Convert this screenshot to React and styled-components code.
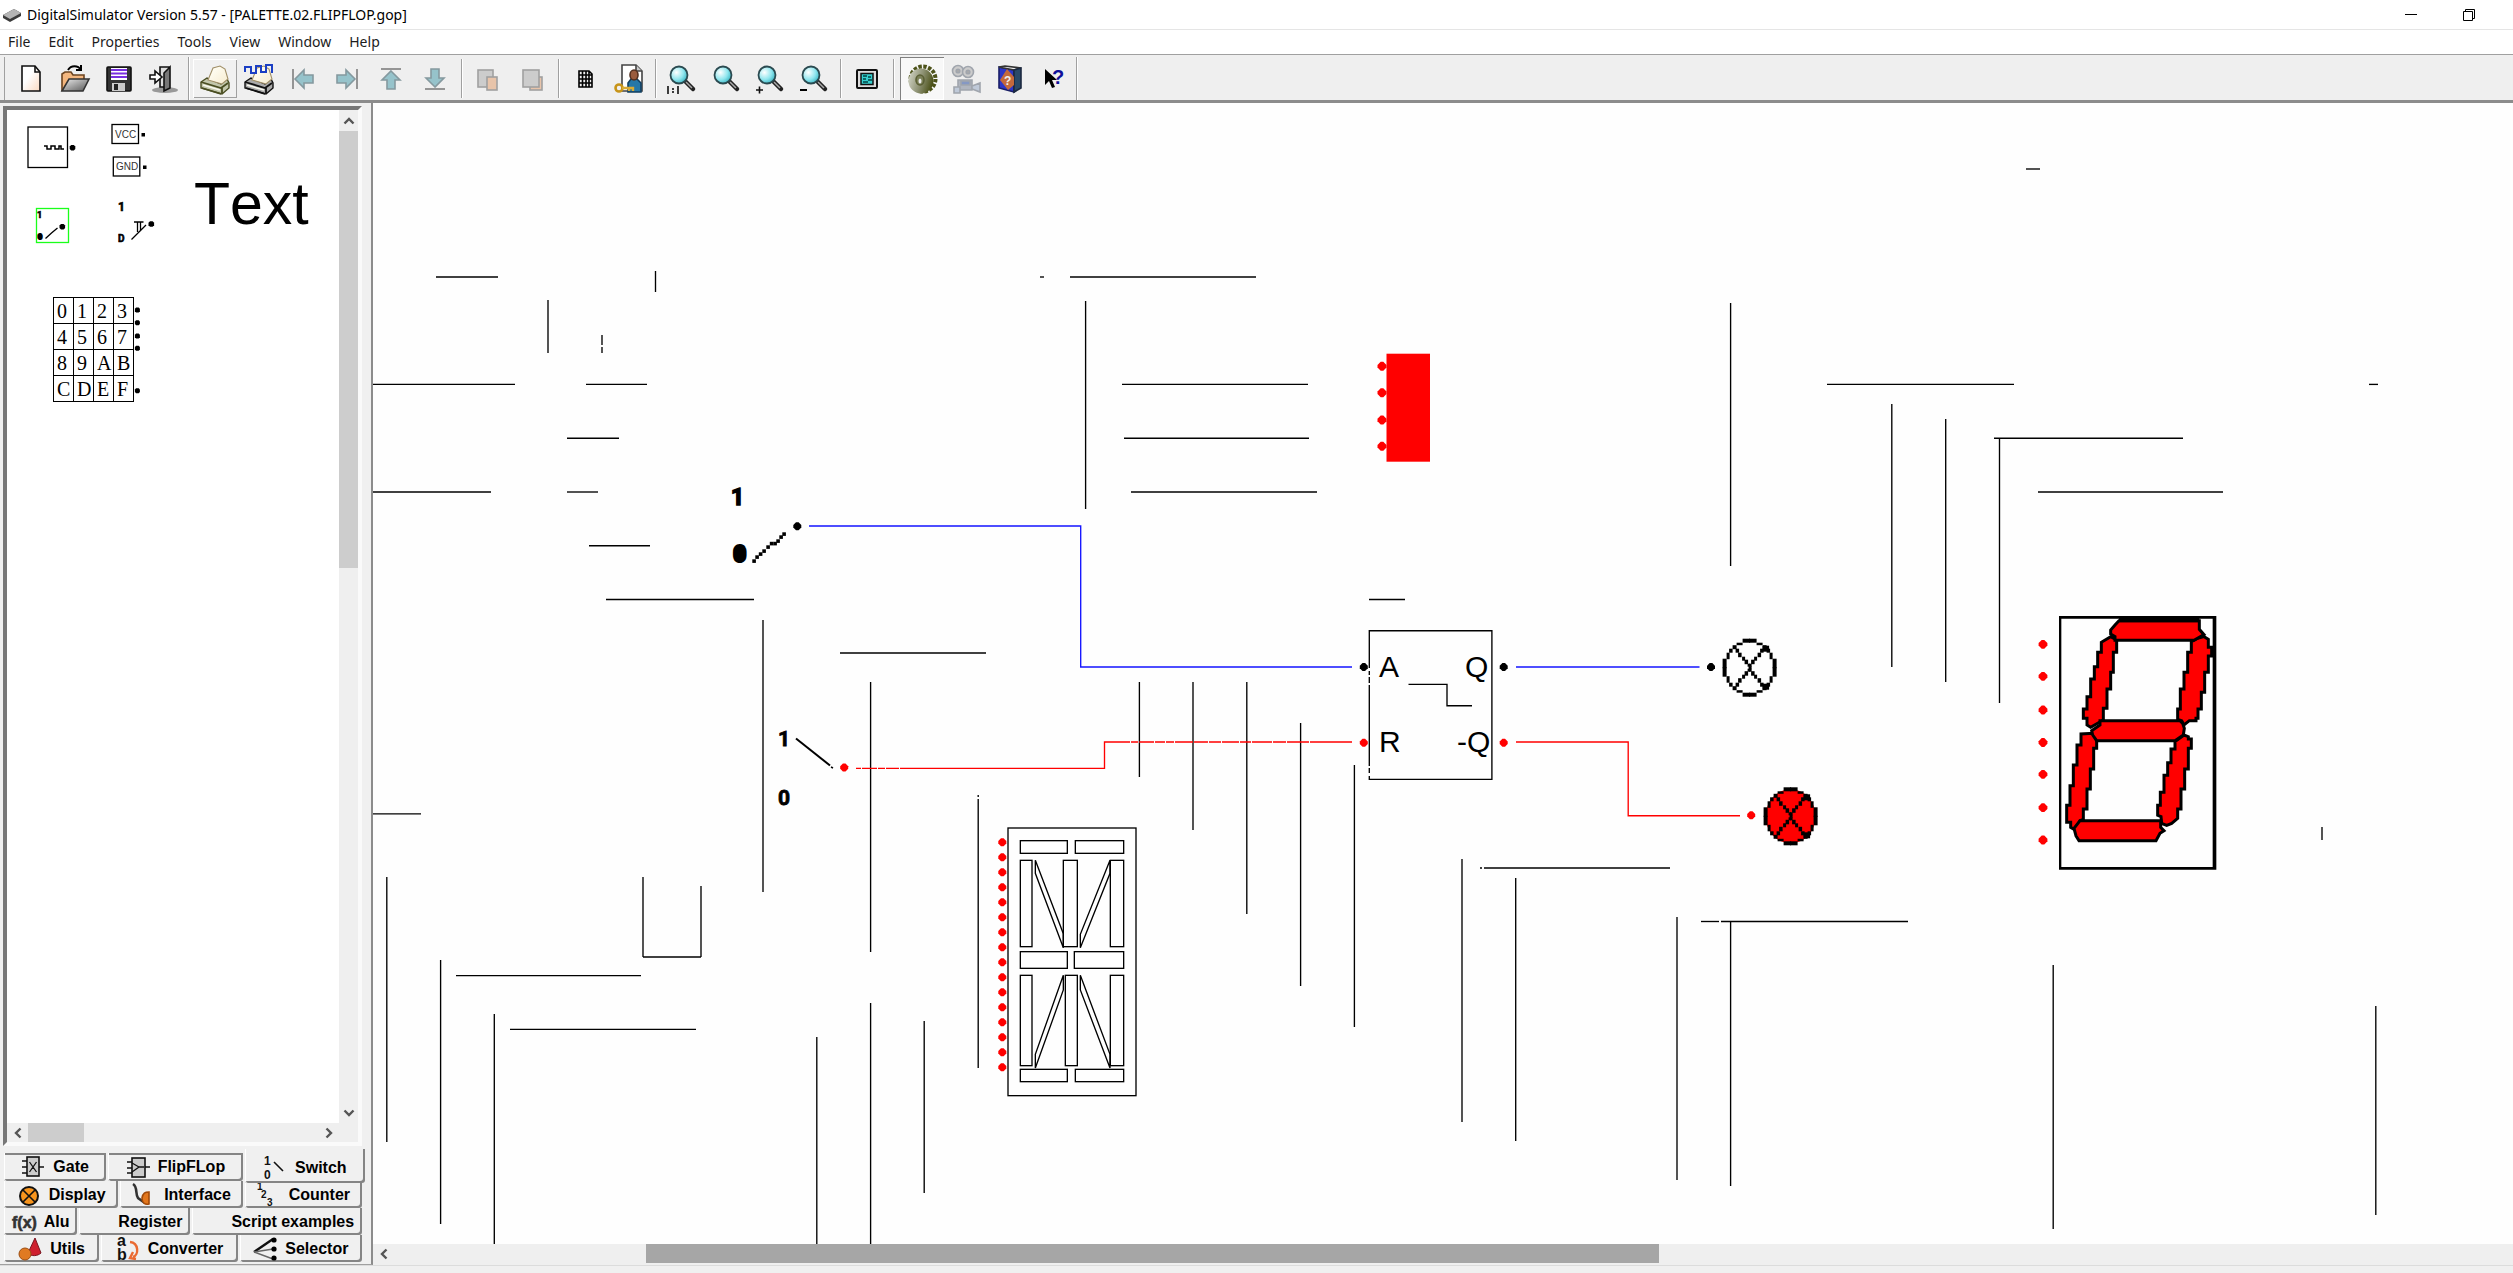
import React from "react";
import styled, { createGlobalStyle } from "styled-components";

const Global = createGlobalStyle`
  * { box-sizing: border-box; }
  body { margin: 0; background: #fff; color: #000; font-family: "Noto Sans", sans-serif; overflow: hidden; }
  button { font: inherit; color: inherit; padding: 0; border: 0; background: none; }
`;

const Window = styled.div`
  display: grid;
  grid-template-rows: 29px 25px 49px minmax(0, 1fr) 8px;
  height: 100vh;
`;

const TitleBar = styled.header`
  display: flex;
  align-items: center;
  gap: 6px;
  padding: 0 15px 0 3px;
`;

const Title = styled.h1`
  flex: 1;
  margin: 0;
  font-size: 14px;
  line-height: 20px;
  font-weight: 400;
`;

const WindowControls = styled.div`
  display: flex;
`;

const WindowButton = styled.button`
  display: grid;
  place-items: center;
  width: 58px;
  height: 28px;
`;

const MenuBar = styled.nav`
  display: flex;
  align-items: center;
  gap: 18px;
  padding: 0 8px;
  border-top: 1px solid #e5e5e5;
`;

const MenuItem = styled.button`
  font-size: 14px;
  line-height: 22px;
  color: #1c1c1c;
`;

const ToolBar = styled.div`
  display: flex;
  align-items: stretch;
  padding: 2px 0 0 4px;
  background: #efefef;
  border-top: 1px solid #a0a0a0;
  border-bottom: 3px solid #8c8c8c;
`;

const ToolGroup = styled.div`
  display: flex;
  margin: ${(p) => (p.$first || p.$last ? "0" : "2px 0")};
  padding: 0 4px;
  border-right: 1px solid #a0a0a0;
  box-shadow: 1px 0 #fff;
  ${(p) => p.$first && "border-left: 1px solid #a0a0a0; padding-right: 3px;"}
  ${(p) => p.$last && "padding: 0 0 0 6px;"}
`;

const ToolButton = styled.button`
  display: grid;
  place-items: center;
  width: 44px;
  ${(p) => p.$raised && "box-shadow: inset 1px 1px #fff, inset -1px -1px #a0a0a0; background: #f1f1f1;"}
  ${(p) => p.$pressed && "box-shadow: inset 1px 1px #808080, inset -1px -1px #fff; background: #f8f8f8;"}
  svg { display: block; }
`;

const Body = styled.main`
  display: grid;
  grid-template-columns: 373px minmax(0, 1fr);
  min-height: 0;
`;

const SidePane = styled.aside`
  display: flex;
  flex-direction: column;
  min-height: 0;
  background: #f0f0f0;
  border-right: 2px solid #8c8c8c;
  border-bottom: 1px solid #a0a0a0;
`;

const PaletteFrame = styled.section`
  flex: 1;
  min-height: 0;
  display: grid;
  grid-template: minmax(0, 1fr) 19px / minmax(0, 1fr) 19px;
  margin: 3px 9px 0 3px;
  border: 4px solid;
  border-color: #777 #fafafa #fafafa #777;
`;

const Palette = styled.div`
  position: relative;
  overflow: hidden;
  background: #fff;
`;

const Drawing = styled.svg`
  display: block;
  position: absolute;
  inset: 0;
  width: 100%;
  height: 100%;
`;

const HiddenDefs = styled.svg`
  position: absolute;
`;

const Scroll = styled.div`
  display: flex;
  flex-direction: ${(p) => (p.$vertical ? "column" : "row")};
  background: #efefef;
`;

const ScrollButton = styled.button`
  display: grid;
  place-items: center;
  flex: 0 0 21px;
`;

const Track = styled.div`
  flex: 1;
  display: flex;
  flex-direction: inherit;
`;

const Thumb = styled.div`
  flex: 0 0 ${(p) => p.$size};
  background: ${(p) => p.$color || "#cdcdcd"};
  ${(p) => p.$offset && `margin-left: ${p.$offset};`}
`;

const Keypad = styled.div`
  position: absolute;
  left: 46px;
  top: 187px;
  display: grid;
  grid-template-columns: repeat(4, 20px);
  grid-auto-rows: 26px;
  border: solid #000;
  border-width: 1px 0 0 1px;
`;

const Key = styled.button`
  && {
    border: solid #000;
    border-width: 0 1px 1px 0;
    padding-left: 3px;
    text-align: left;
    font: 20px/24px "Liberation Serif", serif;
  }
`;

const Label = styled.span`
  position: absolute;
  left: 187px;
  top: 60px;
  font: 59px/68px "Liberation Sans", sans-serif;
  font-kerning: none;
`;

const Tabs = styled.nav`
  padding: 7px 9px 2px 4px;
`;

const TabRow = styled.div`
  display: flex;
  gap: 2px;
  height: 28px;
  & + & { height: 27px; }
`;

const Tab = styled.button`
  && {
    flex: ${(p) => p.$w} 1 0;
    display: flex;
    align-items: center;
    justify-content: center;
    gap: 8px;
    font: bold 16px/18px "Liberation Sans", sans-serif;
    white-space: nowrap;
    border-radius: 0 0 3px 2px;
    box-shadow: inset 1px 0 #fff, inset -2px -2px #858585 ${(p) => (p.$top ? ", inset 0 2px #858585" : "")};
    ${(p) =>
      p.$selected &&
      `position: relative; margin: -4px -3px -2px 0; padding-top: 4px; z-index: 1; background: #f0f0f0;
       box-shadow: inset 1px 0 #fff, inset -2px -2px #858585;`}
  }
  svg { flex: none; overflow: visible; }
`;

const Workspace = styled.section`
  display: grid;
  grid-template-rows: minmax(0, 1fr) 19px 2px;
  min-height: 0;
`;

const Sheet = styled.div`
  position: relative;
  overflow: hidden;
  background: #fefefe;
`;

const Status = styled.footer`
  background: #f0f0f0;
  border-top: 1px solid #dcdcdc;
`;

/* ---------- small drawings ---------- */

const Chevron = ({ turn = 0 }) => (
  <svg width="12" height="12" viewBox="0 0 12 12" aria-hidden="true">
    <path d="M8.5 1.5 4 6l4.5 4.5" transform={`rotate(${turn} 6 6)`} fill="none" stroke="#555" strokeWidth="2.4" />
  </svg>
);

const Icon = ({ children, size = 32 }) => (
  <svg width={size} height={size} viewBox={`0 0 ${size} ${size}`} fill="none" stroke="#111" strokeWidth="1.6" aria-hidden="true">
    {children}
  </svg>
);

const Defs = () => (
  <HiddenDefs width="0" height="0" aria-hidden="true">
    <defs>
      <linearGradient id="paper" x1="0" y1="0" x2="1" y2="1">
        <stop offset="0.4" stopColor="#fff" />
        <stop offset="1" stopColor="#fbd9c0" />
      </linearGradient>
      <linearGradient id="sheet" x1="0" y1="0" x2="1" y2="1">
        <stop offset="0.2" stopColor="#fffdf2" />
        <stop offset="1" stopColor="#f6ecd0" />
      </linearGradient>
      <linearGradient id="steel" x1="0" y1="0" x2="1" y2="1">
        <stop offset="0" stopColor="#eee" />
        <stop offset="1" stopColor="#555" />
      </linearGradient>
      <radialGradient id="lens" cx="0.35" cy="0.35" r="0.7">
        <stop offset="0" stopColor="#fff" />
        <stop offset="0.6" stopColor="#8fe6ee" />
        <stop offset="1" stopColor="#3cb6c4" />
      </radialGradient>
      <linearGradient id="gear" x1="0" y1="0.3" x2="1" y2="0.6">
        <stop offset="0" stopColor="#cfd1c2" />
        <stop offset="0.5" stopColor="#8d9173" />
        <stop offset="1" stopColor="#474d12" />
      </linearGradient>
    </defs>
  </HiddenDefs>
);

const NewIcon = () => (
  <Icon>
    <path d="M7 3h13l5 6v19H7z" fill="url(#paper)" />
    <path d="M20 3v6h5" />
  </Icon>
);
const OpenIcon = () => (
  <Icon>
    <path d="M9 7c3-5 10-5 13 0M22 2v5h-5" stroke="#000" strokeWidth="2" />
    <path d="M3 28V11l3-2h6l2 3h11v4" fill="#f3b67e" stroke="#6b4420" />
    <path d="M3 28 10 16h20l-6 12z" fill="url(#steel)" stroke="#333" />
  </Icon>
);
const SaveIcon = () => (
  <Icon>
    <rect x="4" y="4" width="24" height="24" rx="1" fill="#333" stroke="#111" />
    <rect x="8" y="5" width="16" height="12" fill="#fff" stroke="none" />
    <path d="M8 7h16M8 10.500h16M8 14h16" stroke="#7a2fe0" strokeWidth="2" />
    <rect x="9" y="20" width="13" height="8" fill="#ccc" stroke="none" />
    <rect x="11" y="21" width="4" height="6" fill="#222" stroke="none" />
  </Icon>
);
const ExitIcon = () => (
  <Icon>
    <ellipse cx="18" cy="27" rx="13" ry="3" fill="#999" stroke="none" />
    <path d="M13 4h9v20h-9z" fill="#ddd" />
    <path d="m23 4-6 6v18l6-3z" fill="#777" />
    <path d="M3 12h5V8l7 6-7 6v-4H3z" fill="#fff" />
  </Icon>
);
const Printer = ({ body = "#c3c7ac", line = "#4a4e22" }) => (
  <g stroke={line} strokeWidth="1.4">
    <path d="M2 19 8 15l14 6 6-5 2 4v5l-7 6L2 25z" fill={body} />
    <path d="m2 19 20 6 7-5M23 25v5" strokeWidth="1.8" />
    <path d="m4 22 17 5" stroke="#f8f8ee" strokeWidth="1.6" />
    <path d="m3 25 19 6" strokeWidth="1.8" />
    <path d="M9 17 14 5l7-2 5 3 3 10-6 5z" fill="url(#sheet)" stroke="#a08f68" strokeWidth="1.1" />
  </g>
);
const PrintIcon = () => (
  <Icon>
    <Printer />
  </Icon>
);
const PrintWaveIcon = () => (
  <Icon>
    <Printer body="#aaa" line="#111" />
    <path d="M2 9V4h6v6h5V3h5v6h5V2h6v8" stroke="#1b3fc4" strokeWidth="2" />
  </Icon>
);
const ArrowIcon = ({ turn }) => (
  <Icon>
    <g transform={`rotate(${turn} 16 16)`} stroke="#85999f">
      <path d="m8 16 9-9v5h9v8h-9v5z" fill="#96c3cb" />
      <path d="M6 6v20" stroke="#959595" strokeWidth="2" />
    </g>
  </Icon>
);
const LayerIcon = ({ front }) => (
  <Icon>
    {front ? (
      <>
        <rect x="14" y="14" width="12" height="13" fill="#e8c4aa" stroke="#a0a0a0" />
        <rect x="7" y="7" width="16" height="17" fill="#ccc" stroke="#a0a0a0" />
      </>
    ) : (
      <>
        <rect x="6" y="7" width="15" height="17" fill="#ccc" stroke="#a0a0a0" />
        <rect x="15" y="14" width="10" height="13" fill="#e8c4aa" stroke="#a0a0a0" />
      </>
    )}
  </Icon>
);
const GridIcon = () => (
  <Icon>
    <path d="M10 8h10l3 3v13H10zM10 12h13M10 16h13M10 20h13M13.500 8v16M17 8v16M20 8v16" stroke="#000" />
  </Icon>
);
const UserKeyIcon = () => (
  <Icon>
    <path d="M9 2h14l6 6v20H9z" fill="#fff" stroke="#444" />
    <path d="M23 2v6h6" fill="#ccc" stroke="#444" />
    <path d="M15 29V20l3-4h6l4 4v9z" fill="#2577a8" stroke="#123f60" />
    <ellipse cx="21" cy="12" rx="4" ry="5" fill="#9a5c3e" stroke="#53301f" />
    <circle cx="6" cy="25" r="3.500" stroke="#c79418" strokeWidth="2.6" />
    <path d="M9 25h11v3M16 25v3" stroke="#d9ab35" strokeWidth="2.4" />
  </Icon>
);
const Lens = ({ mark }) => (
  <Icon>
    <path d="m19 18 8 8" stroke="#222" strokeWidth="4.5" strokeLinecap="round" />
    <path d="m20 19 6 6" stroke="#aaa" strokeWidth="1.5" />
    <circle cx="13" cy="12" r="8.500" fill="url(#lens)" stroke="#2b4a50" strokeWidth="1.8" />
    {mark === "1:1" && <path d="M2 23v8M12 23v8M7 25v2M7 28v2" />}
    {mark === "+" && <path d="M2 27h7M5.500 23.500v7" />}
    {mark === "-" && <path d="M2 27h7" stroke="#000" strokeWidth="2" />}
  </Icon>
);
const PanelIcon = () => (
  <Icon>
    <rect x="6" y="7" width="20" height="18" rx="1" fill="#ddd" strokeWidth="2" />
    <rect x="10" y="10.500" width="12" height="11" fill="#35cfcf" strokeWidth="1.500" />
    <path d="M12 13h4M12 16h3M12 19h5M17 14h3M17 17h4" stroke="#044" />
  </Icon>
);
const GearIcon = () => (
  <Icon>
    <circle cx="17" cy="16" r="12.500" stroke="#4d531a" strokeWidth="4" strokeDasharray="3.4 1.5" />
    <circle cx="15" cy="18" r="12.500" fill="url(#gear)" stroke="none" />
    <ellipse cx="14" cy="17" rx="4" ry="5" fill="#7b8058" stroke="#5a5f34" />
    <ellipse cx="14" cy="18" rx="1.500" ry="2.500" fill="#eee" stroke="none" />
  </Icon>
);
const CameraIcon = () => (
  <Icon>
    <g stroke="#a0a5ad">
      <path d="M8 17h14v10H8z" fill="#b0b5bf" />
      <path d="m22 23 8-3v9l-8-3zM4 24h6v6H4z" fill="#bfc9d8" />
      <circle cx="8" cy="8" r="5.500" fill="#ccc" />
      <circle cx="18" cy="9" r="5.500" fill="#ccc" />
      <circle cx="8" cy="8" r="1.800" fill="#aaa" />
      <circle cx="18" cy="9" r="1.800" fill="#aaa" />
      <path d="M11 18h9v4h-9z" fill="#8598c4" />
    </g>
  </Icon>
);
const BookIcon = () => (
  <Icon>
    <path d="M5 4 20 7v22L5 25z" fill="#2d36c8" stroke="#1a1f66" />
    <path d="m5 4 6-1 16 2-7 2z" fill="#eee" stroke="#333" />
    <path d="m20 7 7-2v20l-7 4z" fill="#2a4a68" stroke="#1c2940" />
    <path d="m13 6 7 8v8l-6 5-8-10z" fill="#c4693c" stroke="none" />
    <text x="10" y="22" fontSize="12" fontWeight="bold" fontFamily="Liberation Sans, sans-serif" fill="#eee" stroke="none">?</text>
  </Icon>
);
const HelpIcon = () => (
  <Icon>
    <path d="M7 6v16l4-4 3 7 3-1-3-7h5z" fill="#000" stroke="none" />
    <text x="14" y="21" fontSize="20" fontWeight="bold" fontFamily="Liberation Sans, sans-serif" fill="#10109a" stroke="none">?</text>
  </Icon>
);

const toolGroups = [
  [
    ["New", <NewIcon />],
    ["Open", <OpenIcon />],
    ["Save", <SaveIcon />],
    ["Exit", <ExitIcon />],
  ],
  [
    ["Print", <PrintIcon />, "raised"],
    ["Print timing", <PrintWaveIcon />],
    ["Align left", <ArrowIcon turn={0} />, "disabled"],
    ["Align right", <ArrowIcon turn={180} />, "disabled"],
    ["Align top", <ArrowIcon turn={90} />, "disabled"],
    ["Align bottom", <ArrowIcon turn={270} />, "disabled"],
  ],
  [
    ["Send back", <LayerIcon />, "disabled"],
    ["Bring to front", <LayerIcon front />, "disabled"],
  ],
  [
    ["Grid", <GridIcon />],
    ["Access", <UserKeyIcon />],
  ],
  [
    ["Actual size", <Lens mark="1:1" />],
    ["Zoom", <Lens />],
    ["Zoom in", <Lens mark="+" />],
    ["Zoom out", <Lens mark="-" />],
  ],
  [["Panel", <PanelIcon />]],
  [
    ["Simulate", <GearIcon />, "pressed"],
    ["Record", <CameraIcon />],
    ["Manual", <BookIcon />],
    ["Context help", <HelpIcon />],
  ],
];

const small = { fontSize: 12, fontFamily: "Liberation Sans, sans-serif", fill: "#111", stroke: "none" };

const tabIcons = {
  Gate: (
    <>
      <rect x="6" y="2" width="12" height="19" fill="#ccc" />
      <path d="M1 6h5M1 12h5M1 18h5M18 12h5M8.500 7l7 10M15.500 7l-7 10" strokeWidth="1.3" />
    </>
  ),
  FlipFLop: (
    <>
      <rect x="6" y="3" width="13" height="19" fill="#ccc" />
      <path d="M1 7h5M1 13h5M1 18h5M19 12h5M6 8l7 4-7 5M13 12h5" strokeWidth="1.3" />
    </>
  ),
  Switch: (
    <>
      <text x="1" y="9" {...small}>1</text>
      <text x="1" y="23" {...small}>0</text>
      <path d="m11 6 9 9" />
    </>
  ),
  Display: (
    <>
      <circle cx="12" cy="13" r="9" fill="#f7941d" strokeWidth="2" />
      <path d="m6 7 12 12M18 7 6 19" />
    </>
  ),
  Interface: (
    <>
      <path d="M1 1c5 3 2 10 5 14l7 5" strokeWidth="2.6" stroke="#333" />
      <path d="M10 15c1-5 3-6 7-6v12c-4 1-7-1-7-6z" fill="#e2761c" stroke="#a34a08" />
    </>
  ),
  Counter: (
    <>
      <text x="0" y="7" {...small} fontSize="10">1</text>
      <text x="4" y="15" {...small} fontSize="10">2</text>
      <text x="10" y="23" {...small} fontSize="10">3</text>
    </>
  ),
  Alu: <text x="0" y="18" {...small} fontSize="16" fill="#333" stroke="#333" strokeWidth="0.6">f(x)</text>,
  Register: null,
  "Script examples": null,
  Utils: (
    <>
      <path d="m17 1-7 15c3 4 10 3 13 0z" fill="#cf1f2e" stroke="#7a1420" strokeWidth="1" />
      <circle cx="7" cy="17" r="6" fill="#e07a22" stroke="#9c4d10" strokeWidth="1" />
    </>
  ),
  Converter: (
    <>
      <text x="1" y="9" {...small} fontSize="16">a</text>
      <text x="1" y="23" {...small} fontSize="16">b</text>
      <path d="M14 5c9 1 9 13 3 15M20 22l-6-1 3-6" stroke="#ea6a32" strokeWidth="2.4" />
    </>
  ),
  Selector: (
    <>
      <path d="M1 15 20 2" strokeWidth="2.4" />
      <path d="m1 15 19-3M1 15l19 7" stroke="#666" />
      <g fill="#000" stroke="none">
        <circle cx="21" cy="3" r="2.6" />
        <circle cx="21" cy="12" r="2.6" />
        <circle cx="21" cy="21" r="2.6" />
      </g>
    </>
  ),
};

const tabRows = [
  [["Gate", 101], ["FlipFLop", 133], ["Switch", 119]],
  [["Display", 114], ["Interface", 122], ["Counter", 117]],
  [["Alu", 73], ["Register", 110], ["Script examples", 170]],
  [["Utils", 95], ["Converter", 136], ["Selector", 122]],
];

/* ---------- circuit symbols ---------- */

const Pin = ({ x, y, r = 4, color = "#000" }) => (
  <path
    d={`M${x - 1.3} ${y - r}h2.600l${r - 1.3} ${r - 1.3}v2.600l${1.3 - r} ${r - 1.3}h-2.600l${1.3 - r} ${1.3 - r}v-2.600z`}
    fill={color}
    stroke="none"
  />
);

const lampQuarter = [
  [20, 0, 7.5, 4],
  [14, 4, 6, 2.5],
  [10, 6.5, 4, 4],
  [6.5, 10, 3.5, 4],
  [4, 14, 3, 6.5],
  [0, 20, 4, 9.5],
];
const lampCross = [
  [13, 10, 3.5, 4], [15.5, 14, 3.5, 4.5], [19.5, 18, 3, 4], [22, 21, 3.5, 4.5], [25, 25, 2.5, 3],
];

const Lamp = ({ x, y, on }) => {
  const quarter = (
    <g>
      {[...lampQuarter, ...lampCross].map(([a, b, w, h]) => (
        <rect key={`${a}-${b}`} x={a} y={b} width={w} height={h} />
      ))}
    </g>
  );
  return (
    <g transform={`translate(${x} ${y})`} stroke="none" fill="#000">
      <ellipse cx="27" cy="29" rx="25" ry="27" fill={on ? "#f00" : "#fefefe"} />
      {quarter}
      <g transform="translate(54 0) scale(-1 1)">{quarter}</g>
      <g transform="translate(0 58) scale(1 -1)">{quarter}</g>
      <g transform="translate(54 58) scale(-1 -1)">{quarter}</g>
      <rect x="26" y="27.500" width="3" height="3" />
      <rect x="40" y="7" width="6.500" height="6" />
      <rect x="40" y="45" width="6.500" height="6" />
    </g>
  );
};

/* [y, x1, x2] */
const horizontals = [
  [169, 2026, 2040], [277, 436, 498], [277, 1040, 1044], [277, 1070, 1256],
  [384.4, 373, 515], [384.4, 586, 647], [384.4, 1122, 1308], [384.4, 1827, 2014], [384.4, 2369, 2378],
  [438.2, 567, 619], [438.2, 1124, 1309], [438.2, 1994, 2183],
  [492, 373, 491], [492, 567, 598], [492, 1131, 1317], [492, 2038, 2223],
  [545.7, 589, 650], [599.5, 606, 754], [599.5, 1369, 1405], [653, 840, 986],
  [813.8, 373, 421], [868, 1480, 1482], [868, 1484, 1670], [921.5, 1701, 1719], [921.5, 1721, 1908],
  [975.6, 456, 641], [1029.3, 510, 696], [957, 643, 701],
];
/* [x, y1, y2] */
const verticals = [
  [548, 300, 353], [602, 335, 345], [602, 347, 353], [655.5, 271, 292], [763, 620, 892],
  [870.6, 682, 952], [870.6, 1003, 1244], [386.8, 877, 1142], [440.6, 960, 1224], [494.3, 1014, 1244],
  [816.8, 1037, 1244], [924.2, 1021, 1193], [643, 877, 957], [701, 886, 957],
  [978.2, 795, 797], [978.2, 799, 1068], [1085.6, 301, 509], [1139.4, 682, 777], [1193, 682, 830],
  [1246.8, 682, 914], [1300.6, 723, 986], [1354.4, 765, 1027], [1462, 859, 1122], [1515.7, 878, 1141],
  [1677, 917, 1180], [1730.6, 303, 566], [1730.6, 922, 1186], [1891.8, 404, 667], [1945.7, 419, 682],
  [1999.5, 439, 703], [2053.2, 965, 1229], [2322, 827, 840], [2375.8, 1006, 1215],
];

const matrixBars = [
  [181, 122, 322, 160], [346, 122, 491, 160], [181, 181, 216, 440], [310, 181, 352, 440], [451, 181, 491, 440],
  [181, 455, 322, 505], [343, 455, 491, 505], [181, 526, 216, 797], [316, 526, 352, 797], [451, 526, 491, 797],
  [181, 808, 322, 845], [346, 808, 491, 845],
];

const segments = [
  "304,157 304,187 293,187 293,230 283,230 283,267 272,267 272,320 261,320 261,357 250,357 250,385 261,385 261,405 272,412 310,390 310,355 321,355 321,297 332,297 332,247 340,247 340,187 350,187 350,150 332,140",
  "574,155 574,187 563,187 563,247 552,247 552,297 541,297 541,357 533,357 533,388 545,392 552,405 568,392 588,392 588,385 594,385 594,357 604,357 604,307 614,307 614,247 625,247 625,198 635,198 635,172 625,172 625,148 612,140 590,146",
  "243,432 243,465 231,465 231,525 220,525 220,587 210,587 210,646 200,646 200,697 212,697 212,712 225,720 240,692 250,688 250,657 261,657 261,597 271,597 271,537 281,537 281,475 290,475 290,452 280,430",
  "525,455 525,477 513,477 513,518 503,518 503,556 492,556 492,607 481,607 481,646 473,646 473,676 483,680 485,700 500,706 515,700 533,685 533,657 543,657 543,597 554,597 554,537 565,537 565,475 574,475 574,447 565,447 565,440 552,435",
  "357,92 598,92 598,118 612,134 582,151 345,151 345,140 332,132 332,120 345,105",
  "300,392 540,392 548,400 553,415 550,435 525,452 290,452 278,435 275,422 300,405",
  "240,692 482,692 482,712 492,722 480,730 468,752 237,752 228,738 222,715",
];

const Schematic = () => (
  <Drawing role="img" aria-label="Flip-flop circuit">
    <g transform="translate(-373 -103)" fill="none" stroke="#000" strokeWidth="1.35" fontFamily="Liberation Sans, sans-serif">
      {horizontals.map(([y, a, b]) => <path key={`h${y}-${a}`} d={`M${a} ${y}H${b}`} />)}
      {verticals.map(([x, a, b]) => <path key={`v${x}-${a}`} d={`M${x} ${a}V${b}`} />)}

      <g stroke="#1414ff">
        <path d="M809 526H1080.700V667H1352" />
        <path d="M1516 667H1699.500" />
      </g>
      <g stroke="#f00">
        <path d="M856 768.300h5m1 0h15m1 0h7m1 0h13m1 0H1104.500V742H1130m1 0h7m1 0h15m1 0h10m1 0h8m1 0h18m1 0h14m1 0h12m1 0h17m1 0h11m1 0h20m1 0h13m1 0h22m1 0H1352" />
        <path d="M1516 742H1628.200V815.700H1740" />
      </g>

      {/* first toggle switch, lower contact */}
      <g fill="#000" stroke="#000" fontFamily="Roboto, sans-serif" fontWeight="bold">
        <text x="731" y="505" fontSize="23" strokeWidth="1.5">1</text>
        <text x="734" y="561" fontSize="20" strokeWidth="4">0</text>
      </g>
      <g fill="#000" stroke="none">
        {[[754, 561], [757, 557], [760.5, 554], [764, 551], [768, 547], [771.5, 543.5], [775, 543.5], [778, 541], [781, 537], [784, 534]].map(([x, y]) => (
          <rect key={x} x={x - 1.7} y={y - 1.7} width="3.600" height="3.600" />
        ))}
      </g>
      <Pin x={797.3} y={526.3} />

      {/* second toggle switch, upper contact */}
      <g fill="#000" stroke="#000" strokeWidth="0.800" fontFamily="Roboto, sans-serif" fontWeight="bold">
        <text x="778" y="746" fontSize="21">1</text>
        <text x="778" y="805" fontSize="21">0</text>
      </g>
      <path d="m796 738.500 34 27" strokeWidth="2" />
      <path d="m831 767 2 1" strokeWidth="1.500" />
      <Pin x={844.2} y={767.5} color="#f00" />

      {/* flip-flop */}
      <path d="M1369.300 668V630.700H1491.900V779.300H1369.300V776m0-3v-5m0-2V685m0-2v-6m0-2v-4" />
      <path d="M1408.500 684.300H1447V705.700H1472" />
      <g fill="#000" stroke="none" fontSize="30">
        <text x="1379" y="677">A</text>
        <text x="1465" y="677">Q</text>
        <text x="1379" y="752">R</text>
        <text x="1457" y="752">-Q</text>
      </g>
      <Pin x={1363.8} y={667} />
      <Pin x={1503.7} y={667} />
      <Pin x={1363.8} y={742.7} color="#f00" />
      <Pin x={1503.7} y={742.7} color="#f00" />

      {/* lamps */}
      <Pin x={1711} y={667} />
      <Lamp x={1722.6} y={638.7} />
      <Pin x={1751.2} y={815.2} color="#f00" />
      <Lamp x={1763.6} y={787.3} on />

      {/* four pin display */}
      <rect x="1386.500" y="353.700" width="43.500" height="108" fill="#f00" stroke="none" />
      {[366.3, 392.7, 420, 446.3].map((y) => <Pin key={y} x={1382} y={y} r={4.5} color="#f00" />)}

      {/* sixteen segment display */}
      {Array.from({ length: 16 }, (_, i) => <Pin key={i} x={1002.3} y={842.3 + i * 15} color="#f00" />)}
      <g transform="translate(960 800) scale(0.33333)" strokeWidth="4">
        <rect x="144" y="84" width="384" height="803" />
        {matrixBars.map(([a, b, c, d]) => <rect key={`${a}-${b}`} x={a} y={b} width={c - a} height={d - b} />)}
        <path d="M226 181 310 401V443L226 220zM450 181V220L361 443V403zM310 526V570L226 804V763zM361 526 450 763V804L361 570z" />
      </g>

      {/* seven segment display */}
      {[644.3, 676.3, 710, 742.5, 774.3, 807.7, 840].map((y) => <Pin key={y} x={2043} y={y} r={4.4} color="#f00" />)}
      <g transform="translate(2000 590) scale(0.33333)" strokeWidth="9">
        <path d="M177 78h472v761H177zM184 86v745h454V86z" fill="#000" stroke="none" fillRule="evenodd" />
        {segments.map((p) => <polygon key={p} points={p} fill="#f00" />)}
        <path d="M357 90h241" strokeWidth="14" />
      </g>
    </g>
  </Drawing>
);

const PaletteDrawing = () => (
  <Drawing role="img" aria-label="Switch symbols">
    <g transform="translate(-7 -110)" fill="none" stroke="#000" strokeWidth="1.300" fontFamily="Liberation Sans, sans-serif">
      <rect x="28" y="127" width="39.500" height="40.500" />
      <path d="M44 146h3v3h4v-3h4v3h4v-3h2v3h3" strokeWidth="1.500" />
      <Pin x={72.5} y={147.7} r={2.8} />
      <rect x="112" y="124.500" width="26.500" height="19" />
      <rect x="113.300" y="157" width="26.500" height="19" />
      <g fill="#333" stroke="none" fontSize="10">
        <text x="115" y="138">VCC</text>
        <text x="116" y="170">GND</text>
        <rect x="141.500" y="133" width="3.500" height="3.500" fill="#000" />
        <rect x="143" y="165.500" width="3.500" height="3.500" fill="#000" />
      </g>

      <rect x="36.500" y="208.500" width="32" height="34" stroke="#1aff1a" />
      <path d="m45.500 238.500 6-5.500 6-5" />
      <Pin x={62.3} y={226.7} r={2.8} />
      <Pin x={151.3} y={224} r={2.8} />
      <path d="m131.500 239.500 14.500-14.500M134 222h9.500M137.500 222v10M140.500 222v9" />
      <g fill="#000" stroke="#000" strokeWidth="0.600" fontWeight="bold" fontFamily="Roboto, sans-serif">
        <text x="37" y="218" fontSize="9">1</text>
        <text x="38" y="239" fontSize="7" strokeWidth="2">0</text>
        <text x="118" y="211" fontSize="12">1</text>
        <text x="118" y="242" fontSize="10">D</text>
      </g>
      {[310, 322.7, 336, 348.3, 390.7].map((y) => <Pin key={y} x={137.4} y={y} r={2.5} />)}
    </g>
  </Drawing>
);

export default function App() {
  return (
    <Window>
      <Global />
      <TitleBar>
        <svg width="18" height="16" viewBox="0 0 18 16" aria-hidden="true">
          <path d="m0 8 11-6 7 4v3L7 15 0 11z" fill="#3b3b3b" />
          <path d="m0 8 11-6 7 4-11 6z" fill="#b5b5b5" />
        </svg>
        <Title>DigitalSimulator Version 5.57 - [PALETTE.02.FLIPFLOP.gop]</Title>
        <WindowControls>
          <WindowButton aria-label="Minimize">
            <svg width="12" height="12"><path d="M0 5.500h12" stroke="#000" /></svg>
          </WindowButton>
          <WindowButton aria-label="Restore">
            <svg width="12" height="12" fill="none" stroke="#000"><path d="M.5 2.500h9v9h-9zM2.500 2.500v-2h9v9h-2" /></svg>
          </WindowButton>
        </WindowControls>
      </TitleBar>

      <MenuBar>
        {["File", "Edit", "Properties", "Tools", "View", "Window", "Help"].map((m) => <MenuItem key={m}>{m}</MenuItem>)}
      </MenuBar>

      <ToolBar role="toolbar">
        {toolGroups.map((group, i) => (
          <ToolGroup key={i} $first={i === 0} $last={i === toolGroups.length - 1}>
            {group.map(([name, icon, state]) => (
              <ToolButton key={name} aria-label={name} disabled={state === "disabled"} $raised={state === "raised"} $pressed={state === "pressed"}>
                {icon}
              </ToolButton>
            ))}
          </ToolGroup>
        ))}
      </ToolBar>

      <Body>
        <SidePane>
          <PaletteFrame>
            <Palette>
              <PaletteDrawing />
              <Label>Text</Label>
              <Keypad>
                {"0123456789ABCDEF".split("").map((k) => <Key key={k}>{k}</Key>)}
              </Keypad>
            </Palette>
            <Scroll $vertical>
              <ScrollButton aria-label="Scroll up"><Chevron turn={90} /></ScrollButton>
              <Track><Thumb $size="45%" /></Track>
              <ScrollButton aria-label="Scroll down"><Chevron turn={270} /></ScrollButton>
            </Scroll>
            <Scroll>
              <ScrollButton aria-label="Scroll left"><Chevron /></ScrollButton>
              <Track><Thumb $size="56px" /></Track>
              <ScrollButton aria-label="Scroll right"><Chevron turn={180} /></ScrollButton>
            </Scroll>
            <Scroll />
          </PaletteFrame>
          <Tabs>
            {tabRows.map((row, i) => (
              <TabRow key={i}>
                {row.map(([name, w]) => (
                  <Tab key={name} $w={w} $top={i === 0} $selected={name === "Switch"}>
                    <Icon size={24}>{tabIcons[name]}</Icon>
                    {name}
                  </Tab>
                ))}
              </TabRow>
            ))}
          </Tabs>
        </SidePane>

        <Workspace>
          <Sheet>
            <Schematic />
          </Sheet>
          <Scroll>
            <ScrollButton aria-label="Scroll left"><Chevron /></ScrollButton>
            <Track><Thumb $size="47.8%" $offset="11.9%" $color="#a6a6a6" /></Track>
          </Scroll>
          <Scroll />
        </Workspace>
      </Body>
      <Status />
      <Defs />
    </Window>
  );
}
